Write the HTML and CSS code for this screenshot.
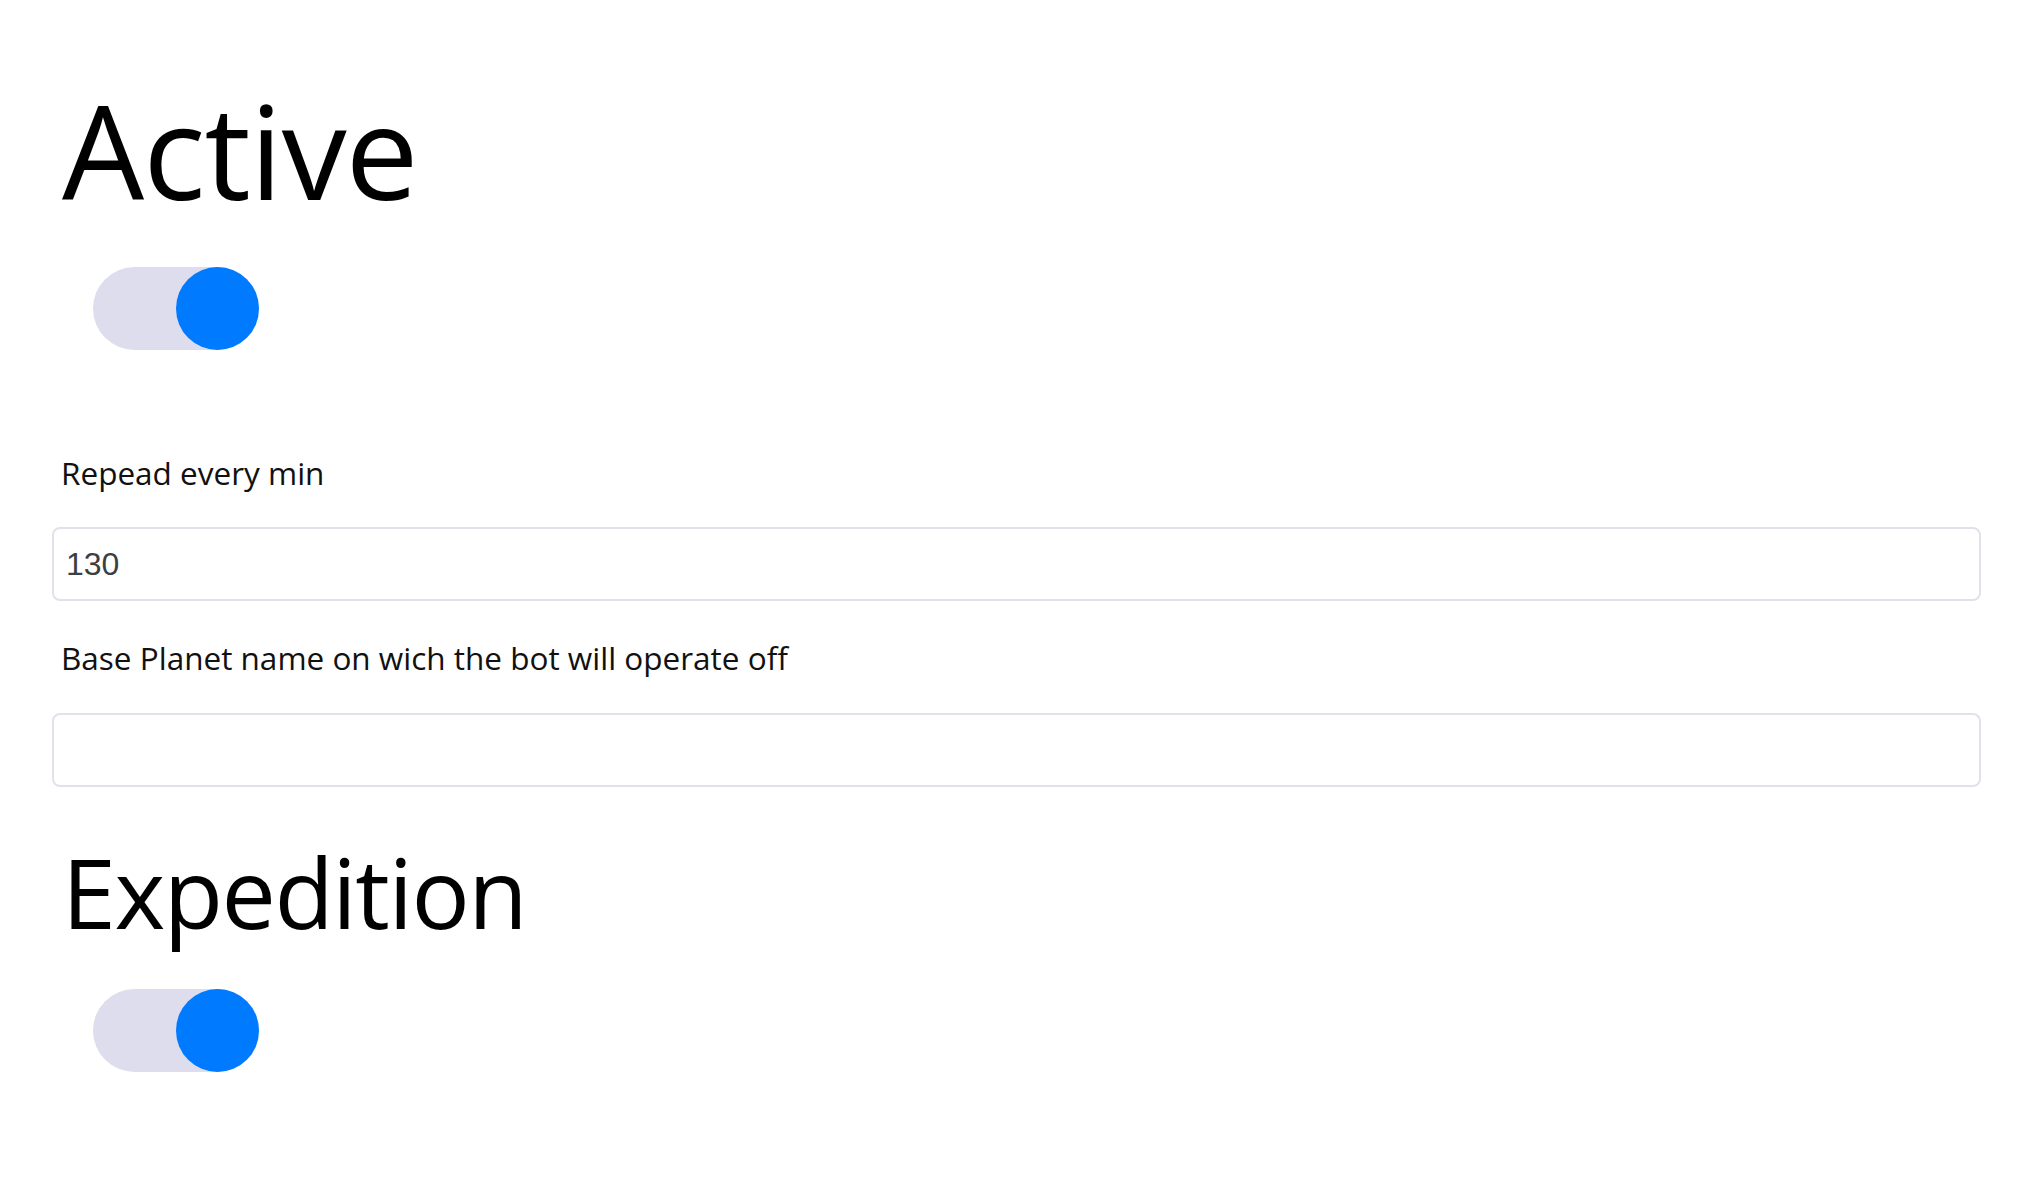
FILE: index.html
```html
<!DOCTYPE html>
<html lang="en">
<head>
<meta charset="utf-8">
<title>Settings</title>
<link rel="stylesheet" href="styles.css">
</head>
<body>
<main class="page">
  <h1 class="title title-active">Active</h1>
  <label class="switch switch-first">
    <input type="checkbox" checked>
    <span class="track"><span class="knob"></span></span>
  </label>

  <div class="field field-first">
    <label class="field-label" for="repeat">Repead every min</label>
    <input class="field-input" id="repeat" type="text" value="130">
  </div>
  <div class="field">
    <label class="field-label" for="planet">Base Planet name on wich the bot will operate off</label>
    <input class="field-input" id="planet" type="text" value="">
  </div>

  <h1 class="title title-exp">Expedition</h1>
  <label class="switch switch-second">
    <input type="checkbox" checked>
    <span class="track"><span class="knob"></span></span>
  </label>
</main>
</body>
</html>
```
FILE: styles.css
```css
* { box-sizing: border-box; }
html, body { margin: 0; padding: 0; background: #fff; }
body {
  font-family: "Open Sans", "Noto Sans", sans-serif;
  color: #111;
}
.page {
  display: flex;
  flex-direction: column;
  align-items: flex-start;
  padding: 85px 46px 40px 52px;
}
.title {
  margin: 0 0 0 10px;
  font-weight: 400;
  line-height: 1;
  color: #000;
}
.title-active { font-size: 130px; letter-spacing: -1px; }
.title-exp { font-size: 97px; letter-spacing: -1.5px; margin-top: 56px; }

.switch {
  display: block;
  margin-left: 41px;
  position: relative;
}
.switch-first { margin-top: 52px; }
.switch-second { margin-top: 49px; }
.switch input { position: absolute; opacity: 0; width: 0; height: 0; }
.track {
  display: flex;
  justify-content: flex-end;
  width: 166px;
  height: 83px;
  border-radius: 42px;
  background: #dedded;
}
.knob {
  width: 83px;
  height: 83px;
  border-radius: 50%;
  background: #007bff;
}

.field {
  display: flex;
  flex-direction: column;
  align-items: stretch;
  align-self: stretch;
  margin-top: 34px;
}
.field-first { margin-top: 100px; }
.field-label {
  font-size: 31.5px;
  line-height: 1.47;
  margin-left: 9px;
  color: #111;
}
.field-input {
  margin-top: 31px;
  height: 74px;
  border: 2px solid #e1e1ec;
  border-radius: 8px;
  padding: 0 12px;
  font-family: "Liberation Sans", Arial, sans-serif;
  font-size: 32px;
  color: #3b3f44;
  background: #fff;
  outline: none;
}
```
